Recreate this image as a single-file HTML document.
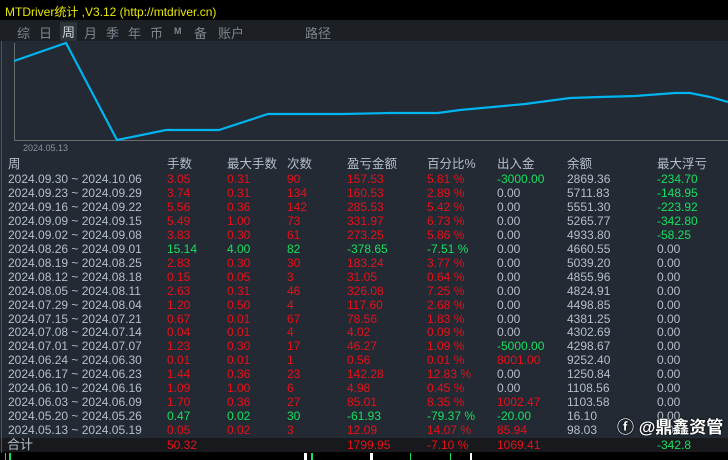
<!DOCTYPE html><html><head><meta charset="utf-8"><style>
body{margin:0;width:728px;height:460px;background:#000;overflow:hidden;font-family:"Liberation Sans","Noto Sans CJK SC",sans-serif;position:relative}
.t{position:absolute;left:5px;top:3px;font-size:12px;color:#e8e800}
.nav{position:absolute;left:0;top:20px;width:728px;height:21px;background:#1c1f24;}
.nav span{position:absolute;top:3px;font-size:13px;color:#7d8590}
.main{position:absolute;left:0;top:41px;width:728px;height:397px;background:#232a33}
.r{position:absolute;left:0;width:728px;height:14px;line-height:14px;font-size:12px;color:#b4bfcc}
.r span{position:absolute;top:0}
.R{color:#e8101a}.G{color:#17e060}
.tot{position:absolute;left:0;top:438px;width:728px;height:14px;background:#17191c}
</style></head><body>
<div class="t">MTDriver统计 ,V3.12 (http://mtdriver.cn)</div>
<div class="nav">
<span style="left:17px">综</span><span style="left:39px">日</span>
<span style="left:60px;top:2px;padding:0 2px;background:#2d333b;color:#cfd6de">周</span>
<span style="left:84px">月</span><span style="left:106px">季</span><span style="left:128px">年</span><span style="left:150px">币</span><span style="left:174px;font-size:9px;top:6px;font-weight:bold">M</span><span style="left:194px">备</span><span style="left:218px">账户</span><span style="left:305px">路径</span>
</div>
<div class="main"></div>
<svg style="position:absolute;left:0;top:0" width="728" height="460">
<line x1="14.5" y1="43" x2="14.5" y2="140" stroke="#6b6b6b"/>
<line x1="14" y1="140.5" x2="728" y2="140.5" stroke="#6b6b6b"/>
<polyline fill="none" stroke="#00b4f0" stroke-width="2.2" points="14,61 66,43 117,140 166,130 219,130 268,114 343,114 390,113 438,113 460,110 482,108 525,104 570,98 600,97 635,96 675,93 690,93 710,97 728,102"/>
</svg>
<div style="position:absolute;left:23px;top:143px;font-size:9px;color:#8a939e">2024.05.13</div>
<div class="tot"></div>
<div id="tb"></div>
<div style="position:absolute;left:0;top:452px;width:728px;height:8px;background:#000"></div>
<div style="position:absolute;left:5px;top:453px;width:1px;height:7px;background:#17e060"></div>
<div style="position:absolute;left:9px;top:453px;width:2px;height:7px;background:#17e060"></div>
<div style="position:absolute;left:304px;top:453px;width:3px;height:7px;background:#fff"></div>
<div style="position:absolute;left:311px;top:453px;width:2px;height:7px;background:#17e060"></div>
<div style="position:absolute;left:370px;top:453px;width:3px;height:7px;background:#fff"></div>
<div style="position:absolute;left:410px;top:453px;width:1px;height:7px;background:#17e060"></div>
<div style="position:absolute;left:450px;top:453px;width:1px;height:7px;background:#17e060"></div>
<div style="position:absolute;left:470px;top:453px;width:2px;height:7px;background:#fff"></div>
<div style="position:absolute;left:1px;top:41px;width:1px;height:412px;background:#555"></div>
<script>
const C=[8,167,227,287,347,427,497,567,657];
const H=['周','手数','最大手数','次数','盈亏金额','百分比%','出入金','余额','最大浮亏'];
const D=[
['2024.09.30 ~ 2024.10.06','3.05','0.31','90','157.53','5.81 %','-3000.00','2869.36','-234.70','RRRRRGwG'],
['2024.09.23 ~ 2024.09.29','3.74','0.31','134','160.53','2.89 %','0.00','5711.83','-148.95','RRRRRwwG'],
['2024.09.16 ~ 2024.09.22','5.56','0.36','142','285.53','5.42 %','0.00','5551.30','-223.92','RRRRRwwG'],
['2024.09.09 ~ 2024.09.15','5.49','1.00','73','331.97','6.73 %','0.00','5265.77','-342.80','RRRRRwwG'],
['2024.09.02 ~ 2024.09.08','3.83','0.30','61','273.25','5.86 %','0.00','4933.80','-58.25','RRRRRwwG'],
['2024.08.26 ~ 2024.09.01','15.14','4.00','82','-378.65','-7.51 %','0.00','4660.55','0.00','GGGGGwww'],
['2024.08.19 ~ 2024.08.25','2.83','0.30','30','183.24','3.77 %','0.00','5039.20','0.00','RRRRRwww'],
['2024.08.12 ~ 2024.08.18','0.15','0.05','3','31.05','0.64 %','0.00','4855.96','0.00','RRRRRwww'],
['2024.08.05 ~ 2024.08.11','2.63','0.31','46','326.08','7.25 %','0.00','4824.91','0.00','RRRRRwww'],
['2024.07.29 ~ 2024.08.04','1.20','0.50','4','117.60','2.68 %','0.00','4498.85','0.00','RRRRRwww'],
['2024.07.15 ~ 2024.07.21','0.67','0.01','67','78.56','1.83 %','0.00','4381.25','0.00','RRRRRwww'],
['2024.07.08 ~ 2024.07.14','0.04','0.01','4','4.02','0.09 %','0.00','4302.69','0.00','RRRRRwww'],
['2024.07.01 ~ 2024.07.07','1.23','0.30','17','46.27','1.09 %','-5000.00','4298.67','0.00','RRRRRGww'],
['2024.06.24 ~ 2024.06.30','0.01','0.01','1','0.56','0.01 %','8001.00','9252.40','0.00','RRRRRRww'],
['2024.06.17 ~ 2024.06.23','1.44','0.36','23','142.28','12.83 %','0.00','1250.84','0.00','RRRRRwww'],
['2024.06.10 ~ 2024.06.16','1.09','1.00','6','4.98','0.45 %','0.00','1108.56','0.00','RRRRRwww'],
['2024.06.03 ~ 2024.06.09','1.70','0.36','27','85.01','8.35 %','1002.47','1103.58','0.00','RRRRRRww'],
['2024.05.20 ~ 2024.05.26','0.47','0.02','30','-61.93','-79.37 %','-20.00','16.10','0.00','GGGGGGww'],
['2024.05.13 ~ 2024.05.19','0.05','0.02','3','12.09','14.07 %','85.94','98.03','0.00','RRRRRRww']];
let h='';
function row(cells,top,cls,fs){h+='<div class="r" style="top:'+top+'px'+(fs?';font-size:'+fs+'px':'')+'">';cells.forEach((c,i)=>{if(c!=='')h+='<span class="'+(cls?cls[i]||'':'')+'" style="left:'+C[i]+'px">'+c+'</span>'});h+='</div>';}
row(H,157,null,12.5);
D.forEach((d,k)=>{const m=d[9];const cl=[''];for(let i=0;i<8;i++)cl.push(m[i]=='R'?'R':m[i]=='G'?'G':'');row(d.slice(0,9),172+k*13.95,cl);});
row(['','50.32','','','1799.95','-7.10 %','1069.41','','-342.8'],438,['','R','','','R','R','R','','G']);
document.getElementById('tb').innerHTML=h;
</script>
<div style="position:absolute;left:7px;top:437px;font-size:13px;line-height:16px;color:#b4bfcc">合计</div>
<div style="position:absolute;left:617px;top:413px;font-size:17px;color:#fff;font-weight:bold;text-shadow:0 0 2px #000">ⓕ @鼎鑫资管</div>
</body></html>
